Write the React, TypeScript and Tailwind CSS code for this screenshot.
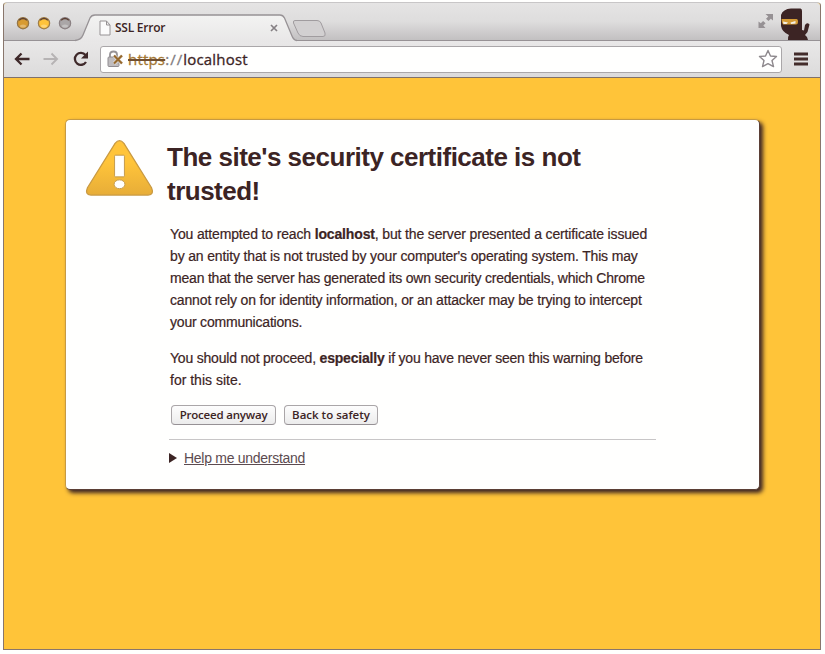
import React from 'react';

const ui = "font-['Open_Sans','Noto_Sans',sans-serif]";

function Light({ fill, rim }: { fill: string; rim: string }) {
  return (
    <svg width="14" height="14" viewBox="0 0 14 14">
      <circle cx="7" cy="7.2" r="5.6" fill={fill} stroke={rim} strokeWidth="1.3" />
      <path d="M3.2 4.2Q7 .9 10.8 4.2" fill="none" stroke="#5c4034" strokeWidth="1.3" />
      <ellipse cx="7" cy="10" rx="3" ry="1.6" fill="#fff" opacity=".3" />
    </svg>
  );
}

function Tab() {
  return (
    <div className="relative mt-[11px] flex h-[27px] w-[222px] items-center pl-[24px] pr-[19px]">
      <svg className="absolute left-0 top-0" width="222" height="28" viewBox="0 0 222 28">
        <defs>
          <linearGradient id="tab" x1="0" y1="0" x2="0" y2="1">
            <stop offset="0" stopColor="#f3f3f2" />
            <stop offset="1" stopColor="#e8e7e7" />
          </linearGradient>
        </defs>
        <path d="M0 28V26.5Q6 26 8 21L15 4Q16.500 1 20 1H205Q208 1 209.500 4L217 22Q218.500 26 222 26.500V28Z" fill="url(#tab)" />
        <path d="M0 26.500Q6 26 8 21L15 4Q16.500 1 20 1H205Q208 1 209.500 4L217 22Q218.500 26 222 26.500" fill="none" stroke="#979295" strokeWidth="1.300" />
      </svg>
      <svg className="relative shrink-0" width="12" height="16" viewBox="0 0 12 16">
        <path d="M1 1H7.500L11 5V15H1ZM7.500 1V5H11" fill="#fbfbfb" stroke="#969294" />
      </svg>
      <span className="relative ml-[4px] mt-px text-[12px] font-semibold leading-4 tracking-[-0.25px]">SSL Error</span>
      <svg className="relative ml-auto mt-px" width="8" height="8" viewBox="0 0 8 8">
        <path d="M1 1L7 7M7 1L1 7" stroke="#858084" strokeWidth="1.700" />
      </svg>
    </div>
  );
}

function TitleBar() {
  return (
    <div className="flex h-[38px] shrink-0 border-b border-[#979295] bg-gradient-to-b from-[#e5e4e4] via-[#dedddd] to-[#c2c0c1] pl-[12px]">
      <div className="mt-[13px] flex w-[59px] shrink-0 gap-[7px]">
        <Light fill="#d79b32" rim="#957647" />
        <Light fill="#ffc33a" rim="#a07e48" />
        <Light fill="#aaa6a7" rim="#8b8183" />
      </div>
      <div className="-mb-px h-[38px]"><Tab /></div>
      <svg className="-ml-[5px] mt-[16px]" width="36" height="20" viewBox="0 0 36 20">
        <path d="M3 1.500H25Q28 1.500 29 4L33 14Q34 17.500 31 17.500H11Q7.500 17.500 6 14L1.500 4Q.8 1.500 3 1.500Z" fill="#d2d0d1" stroke="#a09c9f" />
      </svg>
      <svg className="ml-auto mt-[10px]" width="17" height="17" viewBox="0 0 17 17">
        <path d="M8.500 1H16V7.500L13.800 5.700L11.500 8L9 5.700L11.300 3.400ZM1.500 8.500L3.800 10.300L6.100 8L8.600 10.300L6.300 12.600L8.500 15H1.500Z" fill="#969194" />
      </svg>
      <svg className="ml-[5px] mr-[9px] mt-[5px]" width="32" height="32" viewBox="0 0 32 32">
        <path d="M2 7Q4 1 12 .5H21.500Q23 .5 23 3V22L25 22.500L26 17Q28 14 30.500 16.500L28.500 24L26 27Q29 29 29 32H9Q8.500 29 10 27Q3 24 2 18Z" fill="#3c2424" />
        <path d="M2.500 11H17.500Q19 11 19 14Q19 16.500 17 16.500H4Q2.500 14 2.500 11Z" fill="#d59b35" />
        <path d="M4 13.500L9 14.500L7.500 16H4.500ZM11.500 14.500L16.500 13V15.500L12 16Z" fill="#f4f1e9" />
      </svg>
    </div>
  );
}

function Toolbar() {
  return (
    <div className="flex h-[37px] shrink-0 items-center border-b border-[#80716a] bg-gradient-to-b from-[#e9e8e8] to-[#dcdbdb] pl-[10px]">
      <svg width="16" height="14" viewBox="0 0 16 14">
        <path d="M7.500 1.500L2 7L7.500 12.500M2 7H15.500" fill="none" stroke="#3f292a" strokeWidth="2.300" />
      </svg>
      <svg className="ml-[13px]" width="16" height="14" viewBox="0 0 16 14">
        <path d="M8.500 1.500L14 7L8.500 12.500M14 7H.5" fill="none" stroke="#b6b3b4" strokeWidth="1.900" />
      </svg>
      <svg className="ml-[13px]" width="18" height="16" viewBox="0 0 18 16">
        <path d="M13.500 4A6 6 0 1 0 14 11" fill="none" stroke="#3f292a" strokeWidth="2.300" />
        <path d="M16 .5V7.500H9Z" fill="#3f292a" />
      </svg>
      <div className="ml-[10px] flex h-[27px] w-[682px] items-center rounded-[3px] border border-[#aaa7a9] bg-[#fffffe] pl-[6px] pr-[3px]">
        <svg width="17" height="18" viewBox="0 0 17 18">
          <path d="M3 8V4.500Q3 1.500 6.500 1.500T10 4.500V8" fill="none" stroke="#979396" strokeWidth="1.800" />
          <rect x="1" y="7" width="11" height="9.500" rx="1" fill="#bfbcbe" stroke="#908c90" />
          <path d="M7 5.500L15 13.500M15 5.500L7 13.500" stroke="#eceaea" strokeWidth="3.200" />
          <path d="M7 5.500L15 13.500M15 5.500L7 13.500" stroke="#96692d" strokeWidth="2.300" />
        </svg>
        <span className={`ml-[4px] whitespace-pre text-[15px] font-medium leading-5 tracking-[0.2px] [-webkit-text-stroke:0.3px_currentColor] ${ui}`}><span className="text-[#a47834] line-through decoration-[#704e2f] decoration-[1.5px]">https</span><span className="tracking-[1px] text-[#807b7e]">://</span>localhost</span>
        <svg className="ml-auto" width="20" height="20" viewBox="0 0 20 20">
          <path d="M10 1.500L12.500 7L18.500 7.500L14 11.500L15.500 17.600L10 14.600L4.500 17.600L6 11.500L1.500 7.500L7.500 7Z" fill="#fff" stroke="#8e898d" strokeWidth="1.400" strokeLinejoin="round" />
        </svg>
      </div>
      <svg className="ml-[12px]" width="14" height="14" viewBox="0 0 14 14">
        <path d="M0 2H14M0 7H14M0 12H14" stroke="#432c2b" strokeWidth="2.800" />
      </svg>
    </div>
  );
}

function WarningIcon() {
  return (
    <svg className="ml-[19px] mt-[19px] shrink-0" width="69" height="58" viewBox="0 0 70 58">
      <defs>
        <linearGradient id="warn" x1="0" y1="0" x2="0" y2="1">
          <stop offset=".4" stopColor="#ffc43a" />
          <stop offset="1" stopColor="#e7ad38" />
        </linearGradient>
      </defs>
      <path d="M30.500 4Q35 -1.500 39.500 4L67.500 49Q70.500 56 64 56.500H6Q-.5 56 2.500 49Z" fill="url(#warn)" stroke="#c99a43" strokeWidth="1.300" />
      <rect x="30" y="16" width="10" height="22" rx="1" fill="#fffffe" stroke="#c39a4d" />
      <ellipse cx="35" cy="45.500" rx="5.500" ry="4.500" fill="#fffffe" stroke="#c39a4d" />
    </svg>
  );
}

const button = `h-[20px] rounded-[4px] border border-[#aaa6a8] border-b-[#969195] bg-gradient-to-b from-[#fdfdfd] to-[#ececec] text-[11.5px] font-semibold leading-[16px] whitespace-nowrap ${ui}`;

export default function App() {
  return (
    <div className="h-[654px] w-[825px] overflow-hidden bg-[#fffffe] pl-[3px] pt-[2px] text-[#3c2424]">
      <div className={`flex h-[648px] w-[818px] flex-col overflow-hidden rounded-t-[4px] border border-[#89766c] border-t-[#c8c6c7] bg-[#ffc439] ${ui}`}>
        <TitleBar />
        <Toolbar />
        <main className="ml-[61px] mt-[41px] flex h-[371px] w-[695px] rounded-[5px] border border-[#c79a42] border-b-[#5b3f35] border-r-[#5b3f35] bg-[#fffffe] font-['Liberation_Sans',Arial,sans-serif] shadow-[3px_3px_4px_#3c2424]">
          <WarningIcon />
          <div className="ml-[13px] mt-[20px] w-[500px] whitespace-nowrap">
            <h1 className="text-[26px] font-bold leading-[34px] tracking-[-0.5px]">The site's security certificate is not<br />trusted!</h1>
            <div className="ml-[3px] mt-[15px] text-[14px] leading-[22px] tracking-[-0.15px] [-webkit-text-stroke:0.2px_#3c2424]">
              <p>You attempted to reach <b>localhost</b>, but the server presented a certificate issued<br />by an entity that is not trusted by your computer's operating system. This may<br /><span className="tracking-[-0.2px]">mean that the server has generated its own security credentials, which Chrome</span><br />cannot rely on for identity information, or an attacker may be trying to intercept<br /><span className="tracking-[-0.2px]">your communications.</span></p>
              <p className="mt-[14px]"><span className="tracking-[-0.2px]">You should not proceed, <b>especially</b> if you have never seen this warning before</span><br /><span className="tracking-normal">for this site.</span></p>
            </div>
            <div className="ml-[4px] mt-[14px] flex gap-[8px]">
              <button className={`w-[105px] tracking-[-0.2px] ${button}`}>Proceed anyway</button>
              <button className={`w-[94px] ${button}`}>Back to safety</button>
            </div>
            <div className="ml-[2px] mt-[14px] w-[487px] border-t border-[#c8c6c7]" />
            <div className="ml-[2px] mt-[8px] flex items-center">
              <svg width="9" height="10" viewBox="0 0 9 10"><path d="M0 0L8 5L0 10Z" fill="#3c2424" /></svg>
              <a className="ml-[6px] text-[14px] leading-5 tracking-[-0.28px] text-[#5c4b50] underline">Help me understand</a>
            </div>
          </div>
        </main>
      </div>
    </div>
  );
}
